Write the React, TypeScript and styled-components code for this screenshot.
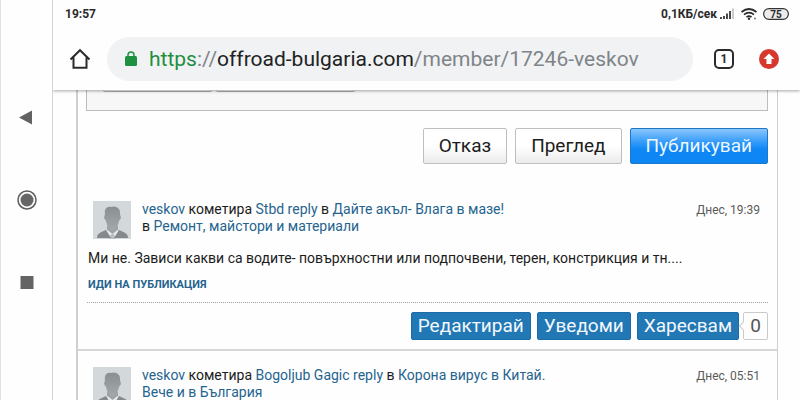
import React from "react";
import styled, { createGlobalStyle } from "styled-components";

const GlobalStyle = createGlobalStyle`
  *, *::before, *::after { box-sizing: border-box; }
  body { margin: 0; background: #fefefe; color: #1c1c1c; font-family: Roboto, "Noto Sans", sans-serif; }
  button { font-family: inherit; cursor: pointer; }
`;

const Screen = styled.div`
  display: flex;
  height: 100vh;
  overflow: hidden;
`;

const NavRail = styled.nav`
  flex: 0 0 53px;
  display: flex;
  flex-direction: column;
  align-items: center;
  justify-content: center;
  gap: 52px;
  border-left: 1px solid #e2e2e2;
  border-right: 1px solid #d4d4d4;
`;

const IconButton = styled.button<{ $size: number }>`
  display: flex;
  align-items: center;
  justify-content: center;
  flex: none;
  width: ${(p) => p.$size}px;
  height: ${(p) => p.$size}px;
  padding: 0;
  border: 0;
  background: none;
`;

const Main = styled.div`
  flex: 1;
  min-width: 0;
  display: flex;
  flex-direction: column;
`;

const BrowserHeader = styled.header`
  flex: none;
  height: 90px;
  background: #fefefe;
  box-shadow: 0 1px 3px rgba(0, 0, 0, 0.35);
  clip-path: inset(0 0 -6px 0);
  z-index: 1;
`;

const StatusBar = styled.div`
  display: flex;
  align-items: center;
  justify-content: space-between;
  height: 28px;
  padding: 0 11px 0 12px;
  font-size: 12px;
  font-weight: 700;
  color: #2b2b2b;
`;

const StatusGroup = styled.div`
  display: flex;
  align-items: center;
`;

const Toolbar = styled.div`
  display: flex;
  align-items: center;
  padding: 9px 21px 0 15px;
`;

const Address = styled.div`
  flex: 1;
  min-width: 0;
  display: flex;
  align-items: center;
  height: 44px;
  margin: 0 21px 0 15px;
  padding: 0 18px;
  gap: 12px;
  border-radius: 22px;
  background: #f0f2f4;
  font-size: 21px;
  color: #808488;
  white-space: nowrap;
`;

const Scheme = styled.span`
  color: #1e8e3e;
`;

const Host = styled.span`
  color: #222;
`;

const TabCount = styled.button`
  width: 20px;
  height: 20px;
  margin-right: 25px;
  padding: 0;
  border: 2px solid #2b2b2b;
  border-radius: 5px;
  background: none;
  color: #2b2b2b;
  font-size: 12px;
  font-weight: 700;
  line-height: 16px;
`;

const Panel = styled.main`
  flex: 1 0 auto;
  margin: 0 22px 0 23px;
  border: solid #cfcfcf;
  border-width: 0 1px 0 2px;
`;

const EditorFooter = styled.div`
  display: flex;
  gap: 4px;
  height: 21px;
  margin: 0 9px 0 8px;
  padding: 0 16px;
  border: solid #bcbcbc;
  border-width: 0 1px 1px;
  background: #f7f7f7;
`;

const HiddenEdge = styled.div<{ $width: number }>`
  width: ${(p) => p.$width}px;
  height: 2px;
  border-bottom: 1px solid #adadad;
  border-radius: 0 0 2px 2px;
`;

const FormActions = styled.div`
  display: flex;
  justify-content: flex-end;
  gap: 8px;
  padding: 17px 9px 21px;
`;

const FormButton = styled.button<{ $primary?: boolean }>`
  height: 36px;
  padding: 0 15px;
  border: 1px solid ${(p) => (p.$primary ? "#1c78c8" : "#bfbfbf")};
  border-radius: 2px;
  background: ${(p) =>
    p.$primary
      ? "linear-gradient(#8cc6fc 0%, #3b9ffa 35%, #0f87f5 60%, #0d86f4 100%)"
      : "linear-gradient(#ffffff 50%, #ebebeb 100%)"};
  color: ${(p) => (p.$primary ? "#eef7ff" : "#1c1c1c")};
  font-size: 19px;
  line-height: 32px;
`;

const Post = styled.article`
  padding: 16px 9px 9px;
  border-bottom: 2px solid #d6d6d6;
`;

const PostHeader = styled.header`
  display: flex;
  align-items: flex-start;
  padding: 0 8px 0 6px;
`;

const PostTitle = styled.div`
  flex: 1;
  min-width: 0;
  padding-left: 11px;
  font-size: 14px;
  line-height: 17px;
`;

const TitleLine = styled.div`
  white-space: nowrap;
`;

const Link = styled.a`
  color: #25648f;
  text-decoration: none;
`;

const PostTime = styled.time`
  font-size: 12px;
  line-height: 18px;
  color: #5a5a5a;
`;

const PostText = styled.p`
  margin: 10px 0 10px 1px;
  font-size: 14px;
  line-height: 18px;
`;

const GoToPost = styled(Link)`
  display: block;
  margin-left: 1px;
  font-size: 11px;
  font-weight: 700;
  line-height: 16px;
  text-transform: uppercase;
`;

const PostActions = styled.footer`
  display: flex;
  justify-content: flex-end;
  gap: 6px;
  margin-top: 9px;
  padding-top: 9px;
  border-top: 1px dotted #a6a6a6;
`;

const PostButton = styled.button`
  height: 28px;
  padding: 0 6px;
  border: 1px solid #1c6ba6;
  border-radius: 2px;
  background: #2277b5;
  color: #f2f8fc;
  font-size: 19px;
  line-height: 24px;
`;

const LikeCount = styled.span`
  position: relative;
  width: 25px;
  height: 28px;
  margin-left: -2px;
  border: 1px solid #cacaca;
  border-radius: 2px;
  color: #555;
  font-size: 19px;
  line-height: 26px;
  text-align: center;

  &::before {
    content: "";
    position: absolute;
    top: 10px;
    left: -4px;
    width: 6px;
    height: 6px;
    border: solid #cacaca;
    border-width: 0 0 1px 1px;
    background: #fefefe;
    transform: rotate(45deg);
  }
`;

const Avatar = () => (
  <svg width="38" height="38" viewBox="0 0 38 38" aria-hidden="true">
    <defs>
      <linearGradient id="head" x1="0" y1="0" x2="0" y2="1">
        <stop offset="0" stopColor="#8a8e91" />
        <stop offset="1" stopColor="#a5a8aa" />
      </linearGradient>
    </defs>
    <rect width="38" height="38" fill="#d3d8db" />
    <path d="M14 25h11v5l-5 5h-1l-5-5z" fill="#a0a3a5" />
    <path d="M12 13c-1-5 2-8 6-7 4-2 10 1 9 7l1 4-2 3c-1 5-3 8-5 9h-3c-2-1-4-4-5-9l-2-3z" fill="url(#head)" />
    <path d="M14.500 29l5 4 5-4 1.500 1.500-3 6.500h-7l-3-6.500z" fill="#e6e9ea" />
    <path d="M17.500 34l2-1.500 2 1.500 1 4h-6z" fill="#b9bdbf" />
    <path d="M4 37c0-4 2-5 9-8l5 8z M35 37c0-4-2-5-9-8l-5 8z" fill="#85898b" />
  </svg>
);

type Segment = { text: string; link?: boolean };

type PostProps = { lines: Segment[][]; time: string; text: string };

const ForumPost = ({ lines, time, text }: PostProps) => (
  <Post>
    <PostHeader>
      <Avatar />
      <PostTitle>
        {lines.map((line, i) => (
          <TitleLine key={i}>
            {line.map((s, j) =>
              s.link ? (
                <Link key={j} href="#">
                  {s.text}
                </Link>
              ) : (
                <React.Fragment key={j}>{s.text}</React.Fragment>
              )
            )}
          </TitleLine>
        ))}
      </PostTitle>
      <PostTime>{time}</PostTime>
    </PostHeader>
    {text && (
      <>
        <PostText>{text}</PostText>
        <GoToPost href="#">Иди на публикация</GoToPost>
        <PostActions>
          <PostButton type="button">Редактирай</PostButton>
          <PostButton type="button">Уведоми</PostButton>
          <PostButton type="button">Харесвам</PostButton>
          <LikeCount>0</LikeCount>
        </PostActions>
      </>
    )}
  </Post>
);

const posts: PostProps[] = [
  {
    lines: [
      [
        { text: "veskov", link: true },
        { text: " кометира " },
        { text: "Stbd reply", link: true },
        { text: " в " },
        { text: "Дайте акъл- Влага в мазе!", link: true },
      ],
      [{ text: "в " }, { text: "Ремонт, майстори и материали", link: true }],
    ],
    time: "Днес, 19:39",
    text: "Ми не. Зависи какви са водите- повърхностни или подпочвени, терен, констрикция и тн....",
  },
  {
    lines: [
      [
        { text: "veskov", link: true },
        { text: " кометира " },
        { text: "Bogoljub Gagic reply", link: true },
        { text: " в " },
        { text: "Корона вирус в Китай.", link: true },
      ],
      [{ text: "Вече и в България", link: true }],
    ],
    time: "Днес, 05:51",
    text: "",
  },
];

export default function App() {
  return (
    <>
      <GlobalStyle />
      <Screen>
        <NavRail aria-label="System">
          <IconButton $size={30} type="button" aria-label="Back">
            <svg width="20" height="20" viewBox="0 0 20 20">
              <path d="M2 9.500L15 2.500v14z" fill="#626262" />
            </svg>
          </IconButton>
          <IconButton $size={30} type="button" aria-label="Home screen">
            <svg width="20" height="20" viewBox="0 0 20 20">
              <circle cx="10" cy="10" r="9" fill="none" stroke="#5c5c5c" strokeWidth="1.500" />
              <circle cx="10" cy="10" r="6.500" fill="#666" />
            </svg>
          </IconButton>
          <IconButton $size={30} type="button" aria-label="Recent apps">
            <svg width="20" height="20" viewBox="0 0 20 20">
              <rect x="3.500" y="4" width="13" height="13" fill="#646464" />
            </svg>
          </IconButton>
        </NavRail>
        <Main>
          <BrowserHeader>
            <StatusBar>
              <span>19:57</span>
              <StatusGroup>
                <span>0,1КБ/сек</span>
                <svg width="72" height="16" viewBox="0 0 72 16" aria-hidden="true">
                  <path d="M4 13v-2M7 13v-3M10 13V7.500M13 13V5" stroke="#2b2b2b" strokeWidth="1.700" />
                  <path d="M16 13V2.500" stroke="#bbb" strokeWidth="1.500" />
                  <g fill="none" stroke="#2b2b2b" strokeWidth="1.700">
                    <path d="M24.500 6q7.500-6 15 0M27 8.700q5-4.200 10 0M29.500 11.200q2.500-2 5 0" />
                  </g>
                  <circle cx="32" cy="12.700" r="1.200" fill="#2b2b2b" />
                  <circle cx="38" cy="12.500" r="1" fill="#777" />
                  <rect x="46.600" y="2.600" width="24.800" height="10.800" rx="5.400" fill="#ececec" stroke="#333" strokeWidth="1.200" />
                  <text x="59" y="11.500" textAnchor="middle" fontSize="10" fontWeight="700" fill="#2b2b2b">
                    75
                  </text>
                </svg>
              </StatusGroup>
            </StatusBar>
            <Toolbar>
              <IconButton $size={24} type="button" aria-label="Home page">
                <svg width="22" height="22" viewBox="0 0 22 22">
                  <path
                    d="M1.500 11.500L11 2.200l9.500 9.300M4.500 9.500v10.300h13V9.500"
                    fill="none"
                    stroke="#2b2b2b"
                    strokeWidth="2"
                  />
                </svg>
              </IconButton>
              <Address>
                <svg width="12" height="16" viewBox="0 0 12 16" aria-hidden="true">
                  <path d="M3 6V4a3 3 0 0 1 6 0v2" fill="none" stroke="#1e9140" strokeWidth="1.500" />
                  <rect y="5" width="12" height="10" rx="1.500" fill="#1e9140" />
                </svg>
                <span>
                  <Scheme>https</Scheme>://<Host>offroad-bulgaria.com</Host>/member/17246-veskov
                </span>
              </Address>
              <TabCount type="button" aria-label="Open tabs: 1">
                1
              </TabCount>
              <IconButton $size={20} type="button" aria-label="Update available">
                <svg width="20" height="20" viewBox="0 0 20 20">
                  <circle cx="10" cy="10" r="10" fill="#d6382d" />
                  <path d="M10 4.500l5.500 5.500h-3v5h-5v-5h-3z" fill="#fff" />
                </svg>
              </IconButton>
            </Toolbar>
          </BrowserHeader>
          <Panel>
            <EditorFooter>
              <HiddenEdge $width={109} />
              <HiddenEdge $width={139} />
            </EditorFooter>
            <FormActions>
              <FormButton type="button">Отказ</FormButton>
              <FormButton type="button">Преглед</FormButton>
              <FormButton type="submit" $primary>
                Публикувай
              </FormButton>
            </FormActions>
            {posts.map((p) => (
              <ForumPost key={p.time} {...p} />
            ))}
          </Panel>
        </Main>
      </Screen>
    </>
  );
}
